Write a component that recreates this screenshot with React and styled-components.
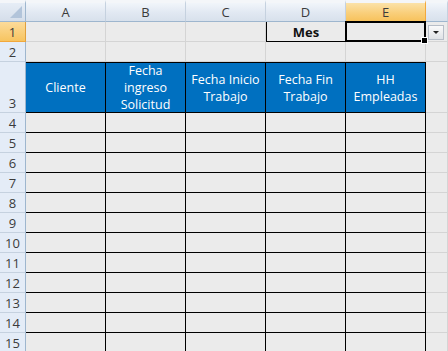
import styled, { createGlobalStyle } from "styled-components";

const GlobalStyle = createGlobalStyle`
	html, body {
		margin: 0;
		padding: 0;
		background: #ebebeb;
		overflow: hidden;
	}
	body {
		font-family: "Open Sans", "Liberation Sans", sans-serif;
	}
`;

const Sheet = styled.div`
	display: grid;
	grid-template-columns: 26px repeat(5, 80px) 22px;
	grid-template-rows: 22px 20px 20px 51px repeat(12, 20px);
	width: 448px;
	height: 351px;
	overflow: hidden;
	background: #ebebeb;
	position: relative;
`;

const Corner = styled.div`
	position: relative;
	box-sizing: border-box;
	border-top: 3px solid #f4f6f9;
	border-right: 1px solid #9eb6ce;
	border-bottom: 1px solid #9eb6ce;
	background: linear-gradient(#e6edf6, #d5deea);

	&::after {
		content: "";
		position: absolute;
		right: 3px;
		bottom: 3px;
		width: 0;
		height: 0;
		border-left: 12px solid transparent;
		border-bottom: 12px solid #b2c4da;
	}
`;

const ColHead = styled.div`
	box-sizing: border-box;
	border-top: 3px solid #f4f6f9;
	border-right: 1px solid ${(p) => (p.$active ? "#f2a83c" : "#c5d1df")};
	border-bottom: 1px solid ${(p) => (p.$active ? "#e0a03c" : "#9eb6ce")};
	background: ${(p) =>
		p.$active
			? "linear-gradient(#fbe2a9, #f9cf7b 55%, #f7c25c)"
			: "linear-gradient(#f1f5fa, #e1e8f2 55%, #d8e1ec)"};
	display: flex;
	align-items: center;
	justify-content: center;
	font-size: 13px;
	color: #3b3b3b;
`;

const RowHead = styled.div`
	box-sizing: border-box;
	border-right: 1px solid ${(p) => (p.$active ? "#e0a03c" : "#9eb6ce")};
	border-bottom: 1px solid ${(p) => (p.$active ? "#f2a83c" : "#c5d1df")};
	background: ${(p) =>
		p.$active ? "linear-gradient(#fcdb9a, #f7c460)" : "#e4ecf7"};
	display: flex;
	align-items: flex-end;
	justify-content: center;
	font-size: 13px;
	line-height: 18px;
	color: #3b3b3b;
`;

const Cell = styled.div`
	box-sizing: border-box;
	border-right: 1px solid ${(p) => (p.$boxed ? "#000" : "#d4d4d4")};
	border-bottom: 1px solid ${(p) => (p.$boxed ? "#000" : "#d4d4d4")};
	border-left: ${(p) => (p.$left ? "1px solid #000" : "none")};
	background: #ebebeb;
	display: flex;
	align-items: center;
	justify-content: center;
	font-size: 13px;
	font-weight: ${(p) => (p.$bold ? 700 : 400)};
	color: #111;
`;

const Selected = styled(Cell)`
	position: relative;
	border: 2px solid #000;
	margin: -1px 0 0 -1px;
	width: calc(100% + 1px);
	height: calc(100% + 1px);

	&::after {
		content: "";
		position: absolute;
		right: -4px;
		bottom: -4px;
		width: 5px;
		height: 5px;
		background: #000;
		border: 1px solid #fff;
	}
`;

const DropButton = styled.div`
	position: absolute;
	left: 428px;
	top: 25px;
	width: 16px;
	height: 15px;
	box-sizing: border-box;
	border: 1px solid #b7bec8;
	background: linear-gradient(#fafafa, #dfe2e6);
	display: flex;
	align-items: center;
	justify-content: center;

	&::after {
		content: "";
		border-left: 3px solid transparent;
		border-right: 3px solid transparent;
		border-top: 3px solid #222;
	}
`;

const Title = styled.div`
	box-sizing: border-box;
	border-right: 1px solid #000;
	border-bottom: 1px solid #000;
	border-top: 1px solid #000;
	background: #0070c0;
	color: #fff;
	display: flex;
	align-items: center;
	justify-content: center;
	text-align: center;
	font-size: 12.5px;
	line-height: 17px;
	padding: 0 3px;
`;

const columns = ["A", "B", "C", "D", "E"];
const titles = [
	["Cliente"],
	["Fecha", "ingreso", "Solicitud"],
	["Fecha Inicio", "Trabajo"],
	["Fecha Fin", "Trabajo"],
	["HH", "Empleadas"],
];
const bodyRows = Array.from({ length: 12 }, (_, i) => i + 4);

function App() {
	return (
		<>
			<GlobalStyle />
			<Sheet>
				<Corner />
				{columns.map((c) => (
					<ColHead key={c} $active={c === "E"}>
						{c}
					</ColHead>
				))}
				<ColHead />

				<RowHead $active>1</RowHead>
				<Cell />
				<Cell />
				<Cell />
				<Cell $boxed $left $bold>
					Mes
				</Cell>
				<Selected />
				<Cell />

				<RowHead>2</RowHead>
				{columns.map((c) => (
					<Cell key={c} />
				))}
				<Cell />

				<RowHead>3</RowHead>
				{titles.map((lines, i) => (
					<Title key={i}>
						<div>
							{lines.map((l) => (
								<div key={l}>{l}</div>
							))}
						</div>
					</Title>
				))}
				<Cell />

				{bodyRows.map((r) => (
					<Row key={r} n={r} />
				))}
				<DropButton />
			</Sheet>
		</>
	);
}

function Row({ n }) {
	return (
		<>
			<RowHead>{n}</RowHead>
			{columns.map((c) => (
				<Cell key={c} $boxed />
			))}
			<Cell />
		</>
	);
}

export default App;
